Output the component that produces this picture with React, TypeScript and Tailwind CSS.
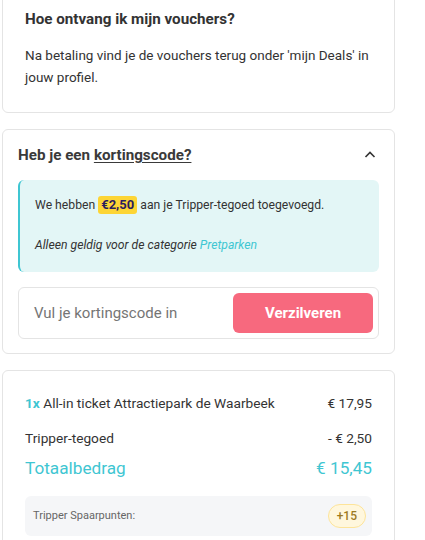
import React from "react";

export default function App() {
  return (
    <div
      className="w-[425px] h-[540px] overflow-hidden bg-white text-[#333]"
      style={{ fontFamily: "Roboto, 'Liberation Sans', sans-serif" }}
    >
      <div className="pl-[2px] w-[395px] flex flex-col gap-[16px]">
        {/* Card 1 */}
        <div className="-mt-[20px] border border-[#e4e4e4] rounded-[6px] pt-[26px] pb-[24px] px-[22px]">
          <div className="text-[15.2px] leading-[24px] font-bold text-[#333]">Hoe ontvang ik mijn vouchers?</div>
          <p className="mt-[13px] text-[13.5px] leading-[22px] text-[#333]">
            Na betaling vind je de vouchers terug onder 'mijn Deals' in jouw profiel.
          </p>
        </div>

        {/* Card 2 */}
        <div className="border border-[#e4e4e4] rounded-[6px] pt-[13px] pb-[14px] px-[15px]">
          <div className="flex items-center justify-between h-[24px]">
            <div className="text-[15.2px] leading-[24px] font-bold text-[#3a3a3a]">
              Heb je een <span className="underline underline-offset-2">kortingscode?</span>
            </div>
            <svg width="14" height="14" viewBox="0 0 14 14" className="mr-[2px]">
              <path d="M2.5 9 L7 4.5 L11.5 9" fill="none" stroke="#333" strokeWidth="1.6" />
            </svg>
          </div>
          <div className="mt-[13px] bg-[#e3f6f6] border-l-2 border-[#3fc6d2] rounded-[6px] pl-[15px] pr-[12px] pt-[15px] pb-[17px] text-[12.2px] leading-[20px] text-[#333]">
            <p>
              We hebben{" "}
              <span className="inline-block bg-[#fdd535] text-[#2b1d5e] font-bold rounded-[3px] px-[3px] leading-[18px] text-[13px]">
                €2,50
              </span>{" "}
              aan je Tripper-tegoed toegevoegd.
            </p>
            <p className="mt-[20px] italic">
              Alleen geldig voor de categorie <span className="text-[#3fc6d2]">Pretparken</span>
            </p>
          </div>
          <div className="mt-[15px] border border-[#e4e4e4] rounded-[6px] h-[52px] flex items-center justify-between pl-[15px] pr-[5px]">
            <span className="text-[15px] text-[#757575]">Vul je kortingscode in</span>
            <button className="w-[140px] h-[40px] bg-[#f7697e] rounded-[6px] text-white font-bold text-[15px]">
              Verzilveren
            </button>
          </div>
        </div>

        {/* Card 3 */}
        <div className="border border-[#e4e4e4] rounded-[6px] pt-[21px] px-[22px] pb-[20px]">
          <div className="flex justify-between text-[13.7px] leading-[22px] text-[#333]">
            <span>
              <span className="text-[#3fc6d2] font-bold">1x</span> All-in ticket Attractiepark de Waarbeek
            </span>
            <span>€ 17,95</span>
          </div>
          <div className="mt-[13px] flex justify-between text-[13.7px] leading-[22px] text-[#333]">
            <span>Tripper-tegoed</span>
            <span>- € 2,50</span>
          </div>
          <div className="mt-[7px] flex justify-between text-[17.2px] leading-[24px] text-[#3fc6d2]">
            <span>Totaalbedrag</span>
            <span>€ 15,45</span>
          </div>
          <div className="mt-[16px] bg-[#f5f6f8] rounded-[6px] h-[40px] flex items-center justify-between pl-[8px] pr-[6px]">
            <span className="text-[11px] text-[#666]">Tripper Spaarpunten:</span>
            <span className="h-[24px] px-[8px] flex items-center rounded-full bg-[#fff7dd] border border-[#fde49a] text-[12px] font-medium text-[#9c7a1e]">
              +15
            </span>
          </div>
        </div>
      </div>
    </div>
  );
}
